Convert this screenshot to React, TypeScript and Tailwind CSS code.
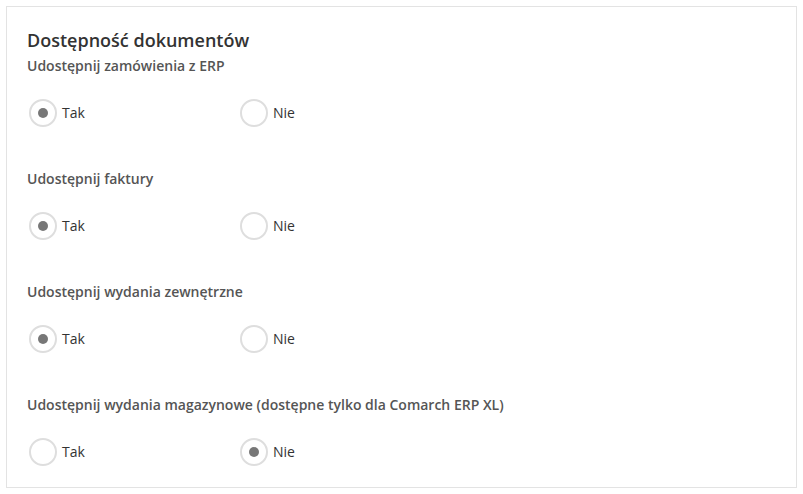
const GROUPS: { label: string; value: 'tak' | 'nie' }[] = [
  { label: 'Udostępnij zamówienia z ERP', value: 'tak' },
  { label: 'Udostępnij faktury', value: 'tak' },
  { label: 'Udostępnij wydania zewnętrzne', value: 'tak' },
  { label: 'Udostępnij wydania magazynowe (dostępne tylko dla Comarch ERP XL)', value: 'nie' },
];

export default function App() {
  return (
    <div className="min-h-screen bg-white p-[6px] font-['Open_Sans',sans-serif]">
      <div className="border border-[#e3e3e3] bg-white pl-[20px] pt-[21px] pb-[21px]">
        <h2 className="text-[18px] leading-[25px] text-[#333] font-semibold">Dostępność dokumentów</h2>
        <div className="mt-[3px] flex flex-col gap-[42px]">
          {GROUPS.map((g) => (
            <div key={g.label}>
              <p className="text-[14px] leading-[20px] text-[#555] font-semibold">{g.label}</p>
              <div className="mt-[23px] flex pl-[2px]">
                <Radio label="Tak" checked={g.value === 'tak'} />
                <Radio label="Nie" checked={g.value === 'nie'} />
              </div>
            </div>
          ))}
        </div>
      </div>
    </div>
  );
}

function Radio({ label, checked }: { label: string; checked: boolean }) {
  return (
    <label className="flex w-[211px] items-center gap-[5px]">
      <span className="flex h-[28px] w-[28px] items-center justify-center rounded-full border-2 border-[#dedede] bg-white">
        {checked && <span className="h-[10px] w-[10px] rounded-full bg-[#777]" />}
      </span>
      <span className="text-[14px] leading-[20px] text-[#333]">{label}</span>
    </label>
  );
}
